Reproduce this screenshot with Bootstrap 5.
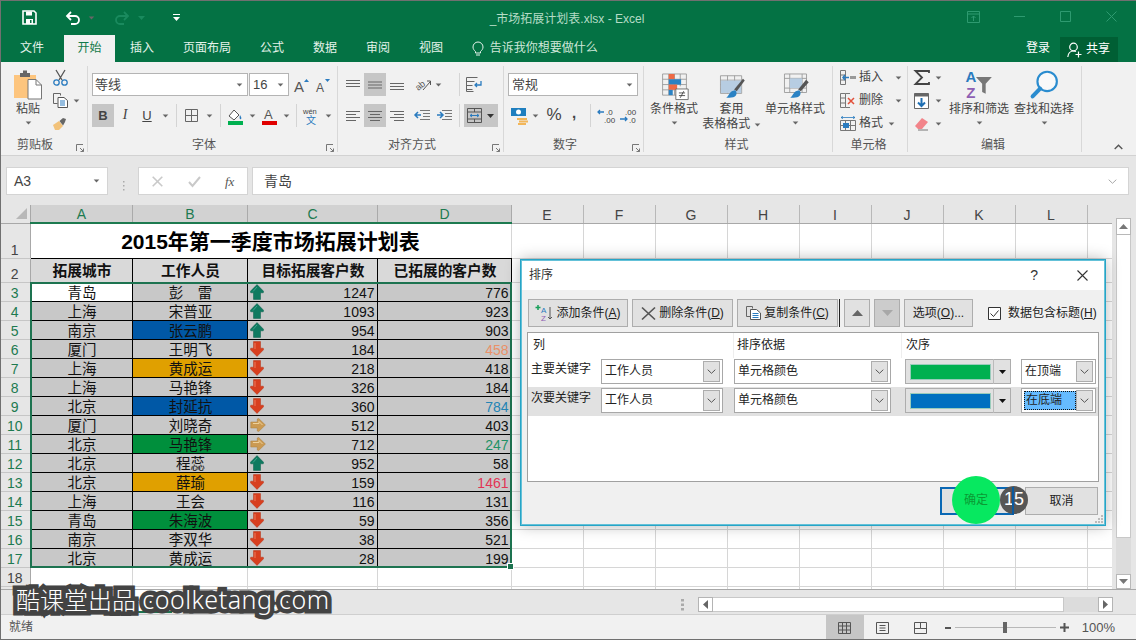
<!DOCTYPE html>
<html lang="zh-CN">
<head>
<meta charset="utf-8">
<title>Excel</title>
<link href="https://cdn.jsdelivr.net/npm/bootstrap@5.3.0/dist/css/bootstrap.min.css" rel="stylesheet">
<style>
html,body{margin:0;height:640px;overflow:hidden}
body{font-family:"Liberation Sans","Noto Sans CJK SC",sans-serif;font-size:12px;color:#444;background:#e6e6e6;line-height:1.2}
svg{display:block;flex:none;overflow:visible}
.xapp{position:relative;width:1136px;height:640px;overflow:hidden}
.xapp::after{content:"";position:absolute;inset:0;border:1px solid #707070;border-right:0;pointer-events:none}
.tbar{height:35px;background:#047244;color:#b5dcc6}
.tside{flex:1 1 0}
.ttext{padding-top:3px}
.wbtns{gap:0;padding-right:2px}
.wb{width:46px;display:flex;justify-content:center;padding-bottom:2px}
.tabs{height:27px;background:#047244;color:#fff;padding-left:5.5px}
.tab{padding:0 14.5px;line-height:27px;color:#e4f2ea;height:27px}
.tab-first{margin-right:5.5px}
.tab-on{background:#f1f1f1;color:#127a4a;padding:0 13.5px;margin-right:0}
.tab-tight{padding-left:15px}
.tell{margin-left:14px;color:#cfe7d9;gap:6px}
.login{color:#fff;margin-right:10px}
.share{width:58px;height:25px;background:#005f34;color:#fff;margin-right:18px;gap:4px;padding-left:7px}
.ribbon{height:94px;background:#f1f1f1;border-bottom:1px solid #d2d2d2}
.rg{position:relative;margin:4px 0 3px;border-right:1px solid #d8d8d8;display:flex;flex-direction:column}
.g1{width:88px}.g2{width:250px}.g3{width:166px}.g4{width:140px}.g5{width:189px}.g6{width:75px}.g7{width:174px}
.rb{flex:1 1 auto;display:flex;min-height:0}
.rl{height:17px;flex:none;display:grid;grid-template-columns:1fr auto 1fr;color:#555;line-height:17px;padding-right:3px;margin-bottom:-2px}
.rlp{padding-right:17px}
.rl span{grid-column:2}
.rl svg{grid-column:3;justify-self:end;align-self:end;margin:0 -14px 2px 0}
.rows{display:flex;flex-direction:column;padding:7px 0 0 4px;gap:8px}
.rr{display:flex;align-items:center;height:23px}
.ic{width:22px;height:23px;display:flex;align-items:center;justify-content:center;flex:none;color:#444}
.ic14{width:14px}.ic12{width:12px}.ic10{width:10px}.ic8{width:8px}.ic20{width:20px}
.on{background:#c6c6c6}
.vs{width:8px;height:23px;display:flex;justify-content:center;flex:none}
.vs::before{content:"";width:1px;background:#d4d4d4}
.sel{height:23px;background:#fff;border:1px solid #b4b4b4;display:flex;align-items:center;justify-content:space-between;padding:0 4px 0 2px;font-size:13px;color:#444;flex:none}
.sfont{width:156px}.ssize{width:40px;margin-left:1px;padding-left:3px}.snum{width:130px;padding-left:3px}
.bigs{padding:4px 0 0 6px;gap:5px}
.big{display:flex;flex-direction:column;align-items:center;text-align:center;color:#444;line-height:15px}
.big svg.bi{width:29px;height:30px;margin-bottom:2px}
.bw48{width:48px}.bw57{width:57px}.bw60{width:60px}
.paste{width:40px;margin-left:8px;margin-right:3px;padding-top:3px}
.big svg.pi{width:30px;height:31px;margin-bottom:2px}
.cliprow{display:flex;flex-direction:column;gap:0;padding-top:0}
.cc{display:flex;align-items:center;height:23px}
.cellcol{padding:0 0 0 7px;display:flex;flex-direction:column}
.cellrow{display:flex;align-items:center;height:23px;gap:3px;white-space:nowrap}
.fbar{height:49px;padding:11px 7px 0 6px;gap:0}
.namebox{width:102px;height:28px;background:#fff;border:1px solid #d4d4d4;font-size:14px;padding:0 7px;color:#444}
.fdots{width:30px;color:#999;line-height:4px}
.fbtns{width:110px;height:28px;background:#fff;border:1px solid #d4d4d4;padding:0 9px 0 13px;margin-right:4px}
.finput{flex:1;height:28px;background:#fff;border:1px solid #d4d4d4;font-size:14px;padding:0 11px;color:#444;margin-right:0}
.finput svg{opacity:.5}
.gridw{position:relative;height:384px;display:flex;overflow:hidden}
.gridbox{width:1112px;overflow:hidden;height:384px;border-bottom:0;flex:none}
table.xs{table-layout:fixed;width:1112px;border-collapse:collapse;background:#fff}
.xs th,.xs td{padding:0;height:19px;font-weight:400;text-align:center;vertical-align:bottom;line-height:18px;font-size:14.5px;color:#111;white-space:nowrap;overflow:hidden}
.xs td{border:1px solid #d6d6d6}
.xs thead th{height:18px;background:#e6e6e6;border-right:1px solid #b8b8b8;border-bottom:1px solid #a8a8a8;font-family:"Liberation Sans",sans-serif;font-size:14px;line-height:16px;color:#444}
.xs thead th.hs{background:#d2d2d2;color:#1d7a50;border-bottom:2px solid #1d7a50;border-right-color:#aaa;padding-left:1px}
.xs th.rh{background:#e6e6e6;border-right:1px solid #a8a8a8;border-bottom:1px solid #c6c6c6;font-family:"Liberation Sans",sans-serif;font-size:14px;color:#444;padding-top:2px;line-height:16px}
.xs th.rg2{color:#1d7a50;background:#e6e6e6}
.xs thead th.corner{background:#e6e6e6;border-right:1px solid #a8a8a8;padding-left:16px;vertical-align:middle}
.xs td.ttl{height:35px;font-size:21px;font-weight:700;color:#000;border:0;border-bottom:1px solid #000;line-height:28px;background:#fff;border-left:0;vertical-align:bottom;padding-bottom:2px}
.xs td.hd{height:24px;background:#d9d9d9;font-weight:700;border:1px solid #000;color:#111;font-size:14.7px;line-height:21px;padding:2px 0 0 2px}
.xs td.c{background:#c8c8c8;border:1px solid #000;padding:2px 0 0 2px;line-height:16px}
.xs td.cw{background:#fff}
.xs td.cb{background:#0058a6}.xs td.cy{background:#e0a000}.xs td.cg{background:#008f3c}
.xs td.n{font-family:"Liberation Sans",sans-serif;font-size:14px;text-align:right;padding-right:2px;padding-left:0}
.nf{display:flex;justify-content:space-between;align-items:flex-end;height:18px;margin-top:-2px;padding-left:2px}
.nf svg{align-self:center}
.t1{color:#ea9168!important}.t2{color:#2384b5!important}.t3{color:#1f9266!important}.t4{color:#e23455!important}
.selbox{position:absolute;left:30px;top:77px;width:482px;height:286px;border:2px solid #1d7350;pointer-events:none}
.selbox::after{content:"";position:absolute;right:-4px;bottom:-4px;box-sizing:content-box;width:5px;height:5px;background:#1d7350;border:1px solid #fff}
.vbar{width:24px;padding:13px 0 0 4px;flex:none}
.vbar>div{width:15px}
.sb{height:17px;background:#fff;border:1px solid #b8b8b8;display:flex;align-items:center;justify-content:center}
.vthumb{height:303px;background:#fff;border:1px solid #c8c8c8;border-top:0}
.vtrack{height:36px;background:#dcdcdc}
.sheets{height:25px;border-top:1px solid #a8a8a8;padding-top:0;background:#e6e6e6}
.stab{width:70px;height:23px;background:#fff;border-bottom:2px solid #1d7350;color:#1d7350;margin-left:102px;text-align:center;line-height:21px}
.stab2{margin-left:22px;color:#444;line-height:24px}
.hs1{width:15px;height:15px;background:#fff;border:1px solid #b4b4b4;display:flex;align-items:center;justify-content:center}
.hs2{width:351px;height:15px;background:#fff;border:1px solid #c8c8c8;border-left:0}
.hs3{width:34px;height:15px;background:#dcdcdc}
.sbar{height:26px;background:#f1f1f1;border-top:1px solid #cfcfcf;padding-left:9px;color:#555}
.vw{width:38px;height:25px;display:flex;align-items:center;justify-content:center}
.vwon{background:#c6c6c6}
.dlg{position:absolute;left:520px;top:259px;width:586px;height:267px;border:1px solid #27a4c6;box-shadow:0 0 14px rgba(0,0,0,.28);background:#f0f0f0;display:flex;flex-direction:column;color:#222;outline:1px solid #64c1d8;outline-offset:-2px}
.dhead{height:30px;background:#fff;padding:0 0 0 8px;color:#333;flex:none}
.dq{margin-left:auto;margin-right:39px;font-size:14px}
.dx{margin-right:17px}
.dbar{margin:9px 0 0 7px;gap:4px;height:28px}
.dbtn{height:28px;padding:0;font-size:12px;line-height:26px;border:1px solid #adadad;border-radius:0;background:#e1e1e1;color:#222;display:flex;align-items:center;justify-content:center;gap:3px;flex:none}
.dbtn:hover{background:#e1e1e1;border-color:#adadad;color:#222}
.w100{width:100px}.w101{width:101px}.w26{width:26px}.w69{width:69px}.w73{width:73px}
.dsplit{width:1px;height:28px;background:#222;margin:0 0 0 -3px;flex:none}
.dchk{margin-left:11px;gap:7px;white-space:nowrap}
.lbx{margin:5px 0 0 6px;width:572px;height:150px;background:#fff;border:1px solid #a0a0a0;flex:none}
.lh{height:25px}
.lh>div{height:25px;line-height:24px;padding-left:5px}
.lh>div.lc2{width:168px;border-left:1px solid #eee;padding-left:3px}
.lh>div.lc3{border-left:1px solid #eee;padding-left:4px}
.lr{height:29px;padding-top:1px;align-items:flex-start}
.lsel{background:#e1e1e1}
.lk{width:73px;padding-left:3px;line-height:18px;padding-top:1px;white-space:nowrap;flex:none}
.cmb{height:25px;background:#fff;border:1px solid #a8a8a8;display:flex;align-items:center;justify-content:space-between;padding-left:3px;padding-right:2px;flex:none;color:#222}
.cmbb{width:17px;height:21px;background:#e1e1e1;border:1px solid #adadad;display:flex;align-items:center;justify-content:center}
.cw122{width:122px;margin-right:11px}.cw157{width:157px;margin-right:14px}.cw75{width:75px;margin-left:10px}
.cc106{width:106px;height:25px;background:#e1e1e1;border:1px solid #adadad;padding:4px 0 4px 4px;gap:2px;flex:none}
.swt{width:81px;height:16px;border:1px solid #9cb;flex:none}
.sg{background:#00b050}.sbl{background:#0070c0}
.cdiv{width:1px;height:25px;background:#bbb;margin:-4px 0;flex:none}
.cdn{margin-left:3px}
.hl{background:#66bbff;outline:1px dotted #111;outline-offset:-1px;padding:2px 1px 2px 2px;margin-left:-1px;width:54px}
.dfoot{margin-top:5px;padding-right:7px;justify-content:flex-end;gap:12px}
.okb{width:73px;height:28px;border:2px solid #0a68b4;background:#e1e1e1;flex:none;padding:0;border-radius:0}
.okb:hover{background:#e1e1e1;border-color:#0a68b4}
.grip{position:absolute;right:1px;bottom:1px}
.tap{position:absolute;left:952px;top:476px;width:48px;height:48px;border-radius:50%;background:#07e860;color:#0b9a34;display:flex;align-items:center;justify-content:center;font-size:12px;z-index:4}
.stepn{position:absolute;left:1000px;top:486px;width:28px;height:28px;border-radius:50%;background:#565656;color:#fff;font-size:18px;display:flex;align-items:center;justify-content:center;font-family:"Liberation Sans",sans-serif;z-index:2}
.okline{position:absolute;left:1012px;top:487px;width:2px;height:28px;background:#0a5aa0;z-index:3}
.wm{position:absolute;left:16px;top:581px;white-space:nowrap;font-size:24px;line-height:36px;color:#fff;font-family:"Noto Sans","Noto Sans CJK SC",sans-serif;font-weight:300;-webkit-text-stroke:9px #434343;paint-order:stroke fill;z-index:5}
.wm2{font-size:25px;letter-spacing:.5px}
</style>
</head>
<body>
<svg width="0" height="0" class="position-absolute">
<defs>
<symbol id="cr" viewBox="0 0 8 5"><path d="M.5.5h7L4 4.500z" fill="#666"/></symbol>
<symbol id="au" viewBox="0 0 14 16"><path d="M7 .6 13.800 7.500l-.6 1.300H10.500v6.600h-7V8.800H.8l-.6-1.300z" fill="#0f7a60" stroke="#0b5f4a" stroke-width=".5"/><path d="M7 3 3 7.500" stroke="#3fa58c" fill="none"/></symbol>
<symbol id="ad" viewBox="0 0 14 16"><path d="M7 15.400 13.800 8.500l-.6-1.300H10.500V.6h-7v6.600H.8l-.6 1.300z" fill="#d83f1f" stroke="#b53216" stroke-width=".5"/><path d="M5 2v6" stroke="#ee7b5c" fill="none"/></symbol>
<symbol id="ar" viewBox="0 0 16 14"><path d="M15.400 7 8.600.4l-1.300.6v3H.8v6h6.500v3l1.300.6z" fill="#cb9a52" stroke="#a97c38" stroke-width=".5"/><path d="M3 5.500h6v-2l3.500 3.500" stroke="#eed19a" fill="none"/></symbol>
<symbol id="chev" viewBox="0 0 9 5"><path d="M.7.7 4.500 4.300 8.300.7" fill="none" stroke="#555"/></symbol>
<symbol id="lnc" viewBox="0 0 8 8"><path d="M.5 7V.5H7M4 4l3.500 3.500M7.500 4.500v3h-3" fill="none" stroke="#777"/></symbol>
</defs>
</svg>
<div class="xapp d-flex flex-column">

<header class="tbar d-flex align-items-center">
  <div class="tside d-flex align-items-center">
    <svg style="margin-left:22px" width="15" height="15" viewBox="0 0 15 15"><path d="M1 1h11l2 2v11H1z" fill="none" stroke="#fff" stroke-width="1.600"/><path d="M4 1.500h6v4H4zM4 9h7v5H4z" fill="#fff"/><path d="M8 10h1.500v3H8z" fill="#047244"/></svg>
    <svg style="margin-left:28px" width="15" height="14" viewBox="0 0 15 14"><path d="M2 5h8a3.800 3.800 0 0 1 0 8H6M6 1 2 5l4 4" fill="none" stroke="#fff" stroke-width="1.800"/></svg>
    <svg style="margin-left:8px" width="7" height="4"><use href="#cr"/></svg>
    <svg style="margin-left:20px" width="15" height="14" viewBox="0 0 15 14"><path d="M13 5H5a3.800 3.800 0 0 0 0 8h4M9 1l4 4-4 4" fill="none" stroke="#1a8a5e" stroke-width="1.800"/></svg>
    <svg style="margin-left:8px" width="7" height="4" viewBox="0 0 7 4"><path d="M0 0h7L3.500 4z" fill="#1a8a5e"/></svg>
    <svg style="margin-left:28px" width="7" height="7" viewBox="0 0 7 7"><path d="M0 .5h7" stroke="#fff"/><path d="M0 3h7L3.500 7z" fill="#fff"/></svg>
  </div>
  <div class="ttext">_市场拓展计划表.xlsx - Excel</div>
  <div class="tside d-flex justify-content-end wbtns">
    <div class="wb"><svg width="13" height="12" viewBox="0 0 13 12"><path d="M.5.5h12v11H.500zM.5 3h12M6.500 10V5M4.500 7l2-2 2 2" fill="none" stroke="#2e9a70"/></svg></div>
    <div class="wb"><svg width="11" height="11" viewBox="0 0 11 11"><path d="M0 5.500h11" stroke="#2e9a70"/></svg></div>
    <div class="wb"><svg width="11" height="11" viewBox="0 0 11 11"><path d="M.5.5h10v10H.500z" fill="none" stroke="#2e9a70"/></svg></div>
    <div class="wb"><svg width="11" height="11" viewBox="0 0 11 11"><path d="M.5.5l10 10M10.500.5l-10 10" fill="none" stroke="#2e9a70"/></svg></div>
  </div>
</header>

<nav class="tabs d-flex align-items-end">
  <div class="tab tab-first">文件</div>
  <div class="tab tab-on">开始</div>
  <div class="tab tab-tight">插入</div>
  <div class="tab">页面布局</div>
  <div class="tab">公式</div>
  <div class="tab">数据</div>
  <div class="tab">审阅</div>
  <div class="tab">视图</div>
  <div class="tell d-flex align-items-center h-100">
    <svg width="12" height="15" viewBox="0 0 12 15"><path d="M3.500 10.500C2 9.300 1 7.800 1 6a5 5 0 0 1 10 0c0 1.800-1 3.300-2.500 4.500v1.500h-5zM4 14h4" fill="none" stroke="#e6f3ec"/></svg>
    <span>告诉我你想要做什么</span>
  </div>
  <div class="login ms-auto h-100 d-flex align-items-center">登录</div>
  <div class="share d-flex align-items-center">
    <svg width="15" height="16" viewBox="0 0 15 16"><circle cx="6.500" cy="5" r="3.800" fill="none" stroke="#fff" stroke-width="1.200"/><path d="M.8 15c.4-3.500 2.200-6 5.700-6 1 0 1.800.2 2.500.6M11.500 9.500v6M8.500 12.500h6" fill="none" stroke="#fff" stroke-width="1.200"/></svg>
    <span>共享</span>
  </div>
</nav>

<section class="ribbon d-flex">
  <div class="rg g1">
    <div class="rb">
      <div class="big paste">
        <svg class="pi" viewBox="0 0 30 31"><path d="M1 6h22v23H1z" fill="#fdc57e"/><path d="M7 4h3V1.500h4V4h3v4H7z" fill="#666"/><path d="M15 10.500h8l5.500 5.500v14H15z" fill="#fff" stroke="#777"/><path d="M23 10.500V16h5.500" fill="none" stroke="#777"/></svg>
        <span>粘贴</span>
        <svg class="mt-1" width="7" height="4"><use href="#cr"/></svg>
      </div>
      <div class="cliprow">
        <div class="cc"><svg style="margin-left:2px" width="15" height="16" viewBox="0 0 15 16"><path d="M3 0l6 10M12 0 6 10" stroke="#555" fill="none" stroke-width="1.300"/><circle cx="3.500" cy="12.500" r="2.700" fill="none" stroke="#2a7bbf" stroke-width="1.300"/><circle cx="11.500" cy="12.500" r="2.700" fill="none" stroke="#2a7bbf" stroke-width="1.300"/></svg></div>
        <div class="cc"><svg style="margin-left:2px" width="15" height="15" viewBox="0 0 15 15"><path d="M.5.5h7v2M.5.500v10h4" fill="none" stroke="#666"/><path d="M5 4.500h6l3.500 3v7H5z" fill="#fff" stroke="#555"/><path d="M7 8h5M7 10h5M7 12h5" stroke="#2a7bbf"/></svg><svg style="margin-left:5px" width="7" height="4"><use href="#cr"/></svg></div>
        <div class="cc"><svg style="margin-left:1px" width="16" height="15" viewBox="0 0 16 15"><path d="M1 9l6-4 4 5-4 4H3z" fill="#f2c27a"/><path d="M7.500 5 11 2l3 1-1 3-2 3.500z" fill="#666"/></svg></div>
      </div>
    </div>
    <div class="rl rlp"><span>剪贴板</span><svg width="8" height="8"><use href="#lnc"/></svg></div>
  </div>

  <div class="rg g2">
    <div class="rb rows">
      <div class="rr">
        <div class="sel sfont">等线<svg width="7" height="4"><use href="#cr"/></svg></div>
        <div class="sel ssize">16<svg width="7" height="4"><use href="#cr"/></svg></div>
        <div class="ic ms-1" style="font-size:15px;width:20px"><svg width="18" height="18" viewBox="0 0 18 18"><text x="0" y="16" font-size="15" fill="#555">A</text><path d="M10 5l2.500-3L15 5z" fill="#2a7bbf" transform="translate(0 1)"/></svg></div>
        <div class="ic"><svg width="16" height="18" viewBox="0 0 16 18"><text x="0" y="16" font-size="12" fill="#555">A</text><path d="M9 3h5l-2.500 3z" fill="#2a7bbf"/></svg></div>
      </div>
      <div class="rr">
        <div class="ic on fw-bold" style="font-size:13px">B</div>
        <div class="ic" style="font-style:italic;font-family:'Liberation Serif',serif;font-size:14px">I</div>
        <div class="ic text-decoration-underline" style="font-size:13px">U</div>
        <div class="ic ic14"><svg width="7" height="4"><use href="#cr"/></svg></div>
        <div class="vs"></div>
        <div class="ic"><svg width="13" height="13" viewBox="0 0 13 13"><path d="M.5.5h12v12H.500zM6.500.5v12M.5 6.500h12" fill="none" stroke="#666"/></svg></div>
        <div class="ic ic14"><svg width="7" height="4"><use href="#cr"/></svg></div>
        <div class="vs"></div>
        <div class="ic"><svg width="17" height="18" viewBox="0 0 17 18"><path d="M2 9l5-6 5 5-5 5z" fill="#fff" stroke="#555"/><path d="M13 8c1 2 2 3 1 4s-2-1-1-4z" fill="#2a7bbf"/><path d="M1 14h15v4H1z" fill="#00b050"/></svg></div>
        <div class="ic ic12"><svg width="7" height="4"><use href="#cr"/></svg></div>
        <div class="ic"><svg width="17" height="18" viewBox="0 0 17 18"><text x="3" y="12" font-size="13" fill="#555">A</text><path d="M1 14h15v4H1z" fill="#e00000"/></svg></div>
        <div class="ic ic12"><svg width="7" height="4"><use href="#cr"/></svg></div>
        <div class="vs"></div>
        <div class="ic" style="line-height:9px"><svg width="18" height="18" viewBox="0 0 18 18"><text x="1" y="7" font-size="7.500" fill="#444">wén</text><text x="4" y="17" font-size="10" fill="#2a7bbf">文</text></svg></div>
        <div class="ic ic12"><svg width="7" height="4"><use href="#cr"/></svg></div>
      </div>
    </div>
    <div class="rl rlp"><span>字体</span><svg width="8" height="8"><use href="#lnc"/></svg></div>
  </div>

  <div class="rg g3">
    <div class="rb rows">
      <div class="rr">
        <div class="ic"><svg width="14" height="10" viewBox="0 0 14 10"><path d="M0 .5h14M0 3.500h14M0 6.500h14" stroke="#666"/></svg></div>
        <div class="ic on"><svg width="14" height="10" viewBox="0 0 14 10"><path d="M0 2h14M0 5h14M0 8h14" stroke="#666"/></svg></div>
        <div class="ic"><svg width="14" height="10" viewBox="0 0 14 10"><path d="M0 3.500h14M0 6.500h14M0 9.500h14" stroke="#666"/></svg></div>
        <div class="ic ms-1"><svg width="17" height="14" viewBox="0 0 17 14"><text x="1" y="11" font-size="9" fill="#555" transform="rotate(-40 5 9)">ab</text><path d="M8 12 15 4M12 3l3.500 0 0 4" fill="none" stroke="#555"/></svg></div>
        <div class="ic ic8"><svg width="7" height="4"><use href="#cr"/></svg></div>
        <div class="vs" style="margin-left:13px"></div>
        <div class="ic"><svg width="16" height="15" viewBox="0 0 16 15"><path d="M.5.5h11M.5 4.500h8M.5 8.500h6M.5 12.500h6M.5.500v14h7" fill="none" stroke="#666"/><path d="M15 4v4H9M11 6 9 8l2 2" fill="none" stroke="#2a7bbf" stroke-width="1.300"/></svg></div>
      </div>
      <div class="rr">
        <div class="ic"><svg width="14" height="10" viewBox="0 0 14 10"><path d="M0 .5h14M0 3.500h10M0 6.500h14M0 9.500h10" stroke="#666"/></svg></div>
        <div class="ic on"><svg width="14" height="10" viewBox="0 0 14 10"><path d="M0 .5h14M2 3.500h10M0 6.500h14M2 9.500h10" stroke="#666"/></svg></div>
        <div class="ic"><svg width="14" height="10" viewBox="0 0 14 10"><path d="M0 .5h14M4 3.500h10M0 6.500h14M4 9.500h10" stroke="#666"/></svg></div>
        <div class="ic" style="margin-left:3px"><svg width="16" height="11" viewBox="0 0 16 11"><path d="M6 .5h10M9 3.500h7M9 6.500h7M6 9.500h10" stroke="#777"/><path d="M7 5H1M4 2 1 5l3 3" fill="none" stroke="#2a7bbf" stroke-width="1.500"/></svg></div>
        <div class="ic"><svg width="16" height="11" viewBox="0 0 16 11"><path d="M6 .5h10M9 3.500h7M9 6.500h7M6 9.500h10" stroke="#777"/><path d="M1 5h6M4 2l3 3-3 3" fill="none" stroke="#2a7bbf" stroke-width="1.500"/></svg></div>
        <div class="vs"></div>
        <div class="d-flex align-items-center on" style="width:34px;height:23px;margin-left:1px"><svg style="margin-left:3px" width="15" height="15" viewBox="0 0 15 15"><path d="M.5.5h14v14H.500zM.5 4h14M.5 11h14M7.500.5V4M7.500 11v3.500" fill="none" stroke="#555"/><path d="M3 7.500h9M3 7.500l2-1.500M3 7.500l2 1.500M12 7.500l-2-1.500M12 7.500l-2 1.500" fill="none" stroke="#2a7bbf"/></svg><svg style="margin-left:5px" width="7" height="4" viewBox="0 0 7 4"><path d="M0 0h7L3.500 4z" fill="#333"/></svg></div>
      </div>
    </div>
    <div class="rl rlp"><span>对齐方式</span><svg width="8" height="8"><use href="#lnc"/></svg></div>
  </div>

  <div class="rg g4">
    <div class="rb rows">
      <div class="rr"><div class="sel snum">常规<svg width="7" height="4"><use href="#cr"/></svg></div></div>
      <div class="rr">
        <div class="ic"><svg width="19" height="18" viewBox="0 0 19 18"><path d="M1 1h15v8H1z" fill="#1f7fbf"/><circle cx="8.500" cy="5" r="2.500" fill="#fff"/><path d="M7 12h10M9 14.500h9M8 17h8" stroke="#f2b65a" stroke-width="1.800"/></svg></div>
        <div class="ic ic10"><svg width="7" height="4"><use href="#cr"/></svg></div>
        <div class="ic ms-1" style="font-size:17px;width:20px">%</div>
        <div class="ic ic20 fw-bold" style="font-size:15px;line-height:13px;height:23px;padding-bottom:6px">,</div>
        <div class="vs" style="width:12px"></div>
        <div class="ic ic20"><svg width="18" height="15" viewBox="0 0 18 15"><text x="9" y="7" font-size="8" fill="#444">.0</text><text x="7" y="15" font-size="8" fill="#444">.00</text><path d="M7 4H1M3 2 1 4l2 2" stroke="#2a7bbf" fill="none" stroke-width="1.300"/></svg></div>
        <div class="ic ic20" style="margin-left:2px"><svg width="18" height="15" viewBox="0 0 18 15"><text x="6" y="7" font-size="8" fill="#444">.00</text><text x="10" y="15" font-size="8" fill="#444">.0</text><path d="M1 11h7M6 9l2 2-2 2" stroke="#2a7bbf" fill="none" stroke-width="1.300"/></svg></div>
      </div>
    </div>
    <div class="rl rlp"><span>数字</span><svg width="8" height="8"><use href="#lnc"/></svg></div>
  </div>

  <div class="rg g5">
    <div class="rb bigs">
      <div class="big bw48">
        <svg class="bi" viewBox="0 0 32 34"><path d="M2.500 4.500h27v24h-27zM2.500 10.500h27M2.500 16.500h27M2.500 22.500h20M9.500 4.500v24M16 4.500v24M22.500 4.500v14" fill="none" stroke="#999"/><path d="M9.500 4.500H16v6H9.500z" fill="#ef6a45"/><path d="M9.500 10.500h14v6h-14z" fill="#2a82c4"/><path d="M9.500 16.500H19v6H9.500z" fill="#ef6a45"/><path d="M9.500 22.500H14v6H9.500z" fill="#2a82c4"/><path d="M17.500 21.500h14v12h-14z" fill="#fff" stroke="#666"/><path d="M21 26h7M21 29h7M26.500 24l-4 7.500" fill="none" stroke="#444"/></svg>
        <span>条件格式</span>
        <svg class="mt-1" width="7" height="4"><use href="#cr"/></svg>
      </div>
      <div class="big bw57">
        <svg class="bi" viewBox="0 0 32 34"><path d="M3.500 6.500h24v20h-24zM3.500 11.500h24M3.500 16.500h24M3.500 21.500h24M11.500 6.500v20M19.500 6.500v20" fill="none" stroke="#999"/><path d="M4 12h23v14H4z" fill="#b7cde2"/><path d="M31 12 22 24l-3-2 10-12z" fill="#555"/><path d="M20 23c3 2 2 7-2 8-3 .5-6 .5-8 .5 3-2 4-8 10-8.500z" fill="#2a82c4"/></svg>
        <span>套用</span>
        <span class="text-nowrap">表格格式 <svg class="d-inline" width="7" height="4"><use href="#cr"/></svg></span>
      </div>
      <div class="big bw60">
        <svg class="bi" viewBox="0 0 32 34"><path d="M3.500 4.500h25v21h-25zM3.500 9.500h25M3.500 20.500h25M9.500 4.500v21M23.500 4.500v21" fill="none" stroke="#999"/><path d="M9.500 9.500h14v11h-14z" fill="#b7cde2"/><path d="M31 14 22 24l-3-2 9-11z" fill="#555"/><path d="M20 23c3 2 2 7-2 8-3 .5-6 .5-8 .5 3-2 4-8 10-8.500z" fill="#2a82c4"/></svg>
        <span class="text-nowrap">单元格样式</span>
        <svg class="mt-1" width="7" height="4"><use href="#cr"/></svg>
      </div>
    </div>
    <div class="rl"><span>样式</span></div>
  </div>

  <div class="rg g6">
    <div class="rb cellcol">
      <div class="cellrow"><svg width="16" height="15" viewBox="0 0 16 15"><path d="M.5.5h5v14h-5zM5.500 5h-5M5.500 10h-5" fill="none" stroke="#777"/><path d="M10 7.500h6" stroke="#999" stroke-width="3"/><path d="M9 7.500H3M5 5 3 7.500 5 10" fill="none" stroke="#2a7bbf" stroke-width="1.500"/></svg><span>插入</span><svg style="margin-left:9px" width="7" height="4"><use href="#cr"/></svg></div>
      <div class="cellrow"><svg width="16" height="15" viewBox="0 0 16 15"><path d="M.5.5h5v14h-5zM5.500 5h-5M5.500 10h-5M5.500 .5H10M5.500 14.500H10" fill="none" stroke="#777"/><path d="M8 5l6 6M14 5l-6 6" stroke="#e2503a" stroke-width="1.500"/></svg><span>删除</span><svg style="margin-left:9px" width="7" height="4"><use href="#cr"/></svg></div>
      <div class="cellrow"><svg width="16" height="15" viewBox="0 0 16 15"><path d="M.5 4.500h15v10H.500zM5.500 4.500v10M10.500 4.500v10M.5 9.500h15" fill="none" stroke="#777"/><path d="M3 7h6v5H3z" fill="#2a7bbf"/><path d="M1 1.500h14M1 1.500l2-1.200M1 1.500l2 1.200M15 1.500l-2-1.200M15 1.500l-2 1.200" stroke="#2a7bbf" fill="none" stroke-width=".8"/></svg><span>格式</span><svg style="margin-left:2px" width="7" height="4"><use href="#cr"/></svg></div>
    </div>
    <div class="rl"><span>单元格</span></div>
  </div>

  <div class="rg g7">
    <div class="rb">
      <div class="cellcol" style="width:41px;padding-left:6px">
        <div class="cellrow" style="gap:5px"><svg width="16" height="15" viewBox="0 0 16 15"><path d="M15 3V1H1.500L8 7.500 1.500 14H15v-2" fill="none" stroke="#444" stroke-width="1.800"/></svg><svg width="7" height="4"><use href="#cr"/></svg></div>
        <div class="cellrow" style="gap:5px"><svg width="15" height="16" viewBox="0 0 15 16"><path d="M.5.5h14v15H.500z" fill="#fff" stroke="#666"/><path d="M.5.500h14v3H.500z" fill="#666"/><path d="M7.500 5v8M4 9.500l3.500 3.500L11 9.500" fill="none" stroke="#1f6fb3" stroke-width="2"/></svg><svg style="margin-left:1px" width="7" height="4"><use href="#cr"/></svg></div>
        <div class="cellrow" style="gap:5px"><svg width="15" height="14" viewBox="0 0 15 14"><path d="M1 9 8 1l6 4-6 7H4z" fill="#f2848a"/><path d="M4 13h10" stroke="#777"/></svg><svg style="margin-left:1px" width="7" height="4"><use href="#cr"/></svg></div>
      </div>
      <div class="big bw60" style="padding-top:4px">
        <svg class="bi" viewBox="0 0 32 34"><text x="0" y="14" font-size="17" fill="#2a7bbf" font-weight="700">A</text><text x="1" y="32" font-size="17" fill="#8e5fb3" font-weight="700">Z</text><path d="M12 8h18l-7 7.500V27l-4-2v-9.500z" fill="#777"/></svg>
        <span class="text-nowrap">排序和筛选</span>
        <svg class="mt-1" width="7" height="4"><use href="#cr"/></svg>
      </div>
      <div class="big bw60" style="padding-top:4px;margin-left:5px">
        <svg class="bi" viewBox="0 0 32 34"><circle cx="19" cy="13" r="11" fill="#fff" fill-opacity=".6" stroke="#2a8ccf" stroke-width="2.400"/><path d="M11 21 2.500 30" stroke="#2a8ccf" stroke-width="4.500" stroke-linecap="round"/></svg>
        <span class="text-nowrap">查找和选择</span>
        <svg class="mt-1" width="7" height="4"><use href="#cr"/></svg>
      </div>
    </div>
    <div class="rl"><span>编辑</span></div>
  </div>
  <div class="flex-grow-1 d-flex justify-content-end align-items-end" style="padding:0 13px 5px 0"><svg width="9" height="6" viewBox="0 0 9 6"><path d="M.7 5 4.500 1.200 8.300 5" fill="none" stroke="#555" stroke-width="1.400"/></svg></div>
</section>

<section class="fbar d-flex">
  <div class="namebox d-flex align-items-center justify-content-between">A3<svg width="7" height="4"><use href="#cr"/></svg></div>
  <div class="fdots d-flex justify-content-center align-items-center"><svg width="3" height="12" viewBox="0 0 3 12"><path d="M1 1h1.500v1.500H1zM1 5h1.500v1.500H1zM1 9h1.500v1.500H1z" fill="#aaa"/></svg></div>
  <div class="fbtns d-flex align-items-center justify-content-between">
    <svg width="11" height="11" viewBox="0 0 11 11"><path d="M.7.7l9.600 9.600M10.300.7.700 10.300" stroke="#c9c9c9" stroke-width="1.600"/></svg>
    <svg width="13" height="11" viewBox="0 0 13 11"><path d="M1 6l3.500 4L12 1" fill="none" stroke="#c9c9c9" stroke-width="2"/></svg>
    <svg width="13" height="13" viewBox="0 0 13 13"><text x="0" y="11" font-family="Liberation Serif" font-style="italic" font-size="13" fill="#555">fx</text></svg>
  </div>
  <div class="finput d-flex align-items-center justify-content-between">青岛<svg width="9" height="5"><use href="#chev"/></svg></div>
</section>

<section class="gridw">
  <div class="gridbox">
  <table class="xs">
    <colgroup><col style="width:30px"><col style="width:102px"><col style="width:115px"><col style="width:130px"><col style="width:134px"><col style="width:72px"><col style="width:72px"><col style="width:72px"><col style="width:72px"><col style="width:72px"><col style="width:72px"><col style="width:72px"><col style="width:72px"><col style="width:25px"></colgroup>
    <thead><tr><th class="corner"><svg width="11" height="11" viewBox="0 0 11 11"><path d="M11 0v11H0z" fill="#b8b8b8"/></svg></th><th class="hs">A</th><th class="hs">B</th><th class="hs">C</th><th class="hs">D</th><th>E</th><th>F</th><th>G</th><th>H</th><th>I</th><th>J</th><th>K</th><th>L</th><th></th></tr></thead>
    <tbody>
      <tr><th class="rh" style="height:35px">1</th><td class="ttl" colspan="4">2015年第一季度市场拓展计划表</td><td></td><td></td><td></td><td></td><td></td><td></td><td></td><td></td><td></td></tr>
      <tr><th class="rh" style="height:24px">2</th><td class="hd">拓展城市</td><td class="hd">工作人员</td><td class="hd">目标拓展客户数</td><td class="hd">已拓展的客户数</td><td></td><td></td><td></td><td></td><td></td><td></td><td></td><td></td><td></td></tr>
      <tr><th class="rh rg2">3</th><td class="c cw">青岛</td><td class="c">彭&emsp;雷</td><td class="c n"><div class="nf"><svg width="14" height="16"><use href="#au"/></svg>1247</div></td><td class="c n">776</td><td></td><td></td><td></td><td></td><td></td><td></td><td></td><td></td><td></td></tr>
      <tr><th class="rh rg2">4</th><td class="c">上海</td><td class="c">宋普亚</td><td class="c n"><div class="nf"><svg width="14" height="16"><use href="#au"/></svg>1093</div></td><td class="c n">923</td><td></td><td></td><td></td><td></td><td></td><td></td><td></td><td></td><td></td></tr>
      <tr><th class="rh rg2">5</th><td class="c">南京</td><td class="c cb">张云鹏</td><td class="c n"><div class="nf"><svg width="14" height="16"><use href="#au"/></svg>954</div></td><td class="c n">903</td><td></td><td></td><td></td><td></td><td></td><td></td><td></td><td></td><td></td></tr>
      <tr><th class="rh rg2">6</th><td class="c">厦门</td><td class="c">王明飞</td><td class="c n"><div class="nf"><svg width="14" height="16"><use href="#ad"/></svg>184</div></td><td class="c n t1">458</td><td></td><td></td><td></td><td></td><td></td><td></td><td></td><td></td><td></td></tr>
      <tr><th class="rh rg2">7</th><td class="c">上海</td><td class="c cy">黄成运</td><td class="c n"><div class="nf"><svg width="14" height="16"><use href="#ad"/></svg>218</div></td><td class="c n">418</td><td></td><td></td><td></td><td></td><td></td><td></td><td></td><td></td><td></td></tr>
      <tr><th class="rh rg2">8</th><td class="c">上海</td><td class="c">马艳锋</td><td class="c n"><div class="nf"><svg width="14" height="16"><use href="#ad"/></svg>326</div></td><td class="c n">184</td><td></td><td></td><td></td><td></td><td></td><td></td><td></td><td></td><td></td></tr>
      <tr><th class="rh rg2">9</th><td class="c">北京</td><td class="c cb">封延抗</td><td class="c n"><div class="nf"><svg width="14" height="16"><use href="#ad"/></svg>360</div></td><td class="c n t2">784</td><td></td><td></td><td></td><td></td><td></td><td></td><td></td><td></td><td></td></tr>
      <tr><th class="rh rg2">10</th><td class="c">厦门</td><td class="c">刘晓奇</td><td class="c n"><div class="nf"><svg width="16" height="14"><use href="#ar"/></svg>512</div></td><td class="c n">403</td><td></td><td></td><td></td><td></td><td></td><td></td><td></td><td></td><td></td></tr>
      <tr><th class="rh rg2">11</th><td class="c">北京</td><td class="c cg">马艳锋</td><td class="c n"><div class="nf"><svg width="16" height="14"><use href="#ar"/></svg>712</div></td><td class="c n t3">247</td><td></td><td></td><td></td><td></td><td></td><td></td><td></td><td></td><td></td></tr>
      <tr><th class="rh rg2">12</th><td class="c">北京</td><td class="c">程蕊</td><td class="c n"><div class="nf"><svg width="14" height="16"><use href="#au"/></svg>952</div></td><td class="c n">58</td><td></td><td></td><td></td><td></td><td></td><td></td><td></td><td></td><td></td></tr>
      <tr><th class="rh rg2">13</th><td class="c">北京</td><td class="c cy">薛瑜</td><td class="c n"><div class="nf"><svg width="14" height="16"><use href="#ad"/></svg>159</div></td><td class="c n t4">1461</td><td></td><td></td><td></td><td></td><td></td><td></td><td></td><td></td><td></td></tr>
      <tr><th class="rh rg2">14</th><td class="c">上海</td><td class="c">王会</td><td class="c n"><div class="nf"><svg width="14" height="16"><use href="#ad"/></svg>116</div></td><td class="c n">131</td><td></td><td></td><td></td><td></td><td></td><td></td><td></td><td></td><td></td></tr>
      <tr><th class="rh rg2">15</th><td class="c">青岛</td><td class="c cg">朱海波</td><td class="c n"><div class="nf"><svg width="14" height="16"><use href="#ad"/></svg>59</div></td><td class="c n">356</td><td></td><td></td><td></td><td></td><td></td><td></td><td></td><td></td><td></td></tr>
      <tr><th class="rh rg2">16</th><td class="c">南京</td><td class="c">李双华</td><td class="c n"><div class="nf"><svg width="14" height="16"><use href="#ad"/></svg>38</div></td><td class="c n">521</td><td></td><td></td><td></td><td></td><td></td><td></td><td></td><td></td><td></td></tr>
      <tr><th class="rh rg2">17</th><td class="c">北京</td><td class="c">黄成运</td><td class="c n"><div class="nf"><svg width="14" height="16"><use href="#ad"/></svg>28</div></td><td class="c n">199</td><td></td><td></td><td></td><td></td><td></td><td></td><td></td><td></td><td></td></tr>
      <tr><th class="rh">18</th><td></td><td></td><td></td><td></td><td></td><td></td><td></td><td></td><td></td><td></td><td></td><td></td><td></td></tr>
      <tr><th class="rh">19</th><td></td><td></td><td></td><td></td><td></td><td></td><td></td><td></td><td></td><td></td><td></td><td></td><td></td></tr>
    </tbody>
  </table>
  </div>
  <div class="selbox"></div>
  <div class="vbar">
    <div class="sb"><svg width="9" height="5" viewBox="0 0 9 5"><path d="M0 5 4.500 0 9 5z" fill="#777"/></svg></div>
    <div class="vthumb"></div>
    <div class="vtrack"></div>
    <div class="sb" style="height:15px"><svg width="9" height="5" viewBox="0 0 9 5"><path d="M0 0 4.500 5 9 0z" fill="#777"/></svg></div>
  </div>
</section>

<section class="sheets d-flex align-items-start">
  <div class="stab">Sheet1</div>
  <div class="stab2">Sheet2</div>
  <div class="stab2">Sheet3</div>
  <div class="d-flex align-items-center" style="margin-left:auto;padding-top:7px;margin-right:23px">
    <svg width="3" height="12" viewBox="0 0 3 12" style="margin-right:14px"><path d="M0 0h3v2.500H0zM0 4.500h3V7H0zM0 9h3v2.500H0z" fill="#aaa"/></svg>
    <div class="hs1"><svg width="5" height="9" viewBox="0 0 5 9"><path d="M5 0 0 4.500 5 9z" fill="#666"/></svg></div>
    <div class="hs2"></div>
    <div class="hs3"></div>
    <div class="hs1"><svg width="5" height="9" viewBox="0 0 5 9"><path d="M0 0l5 4.500L0 9z" fill="#666"/></svg></div>
  </div>
</section>

<footer class="sbar d-flex align-items-center">
  <span>就绪</span>
  <div class="ms-auto d-flex align-items-center" style="margin-right:21px">
    <div class="vw vwon"><svg width="13" height="12" viewBox="0 0 13 12"><path d="M.5.5h12v11H.500zM.5 4h12M.5 8h12M4.500.5v11M8.500.5v11" fill="none" stroke="#555"/></svg></div>
    <div class="vw"><svg width="13" height="12" viewBox="0 0 13 12"><path d="M.5.5h12v11H.500zM3.500 3.500h6M3.500 6h6M3.500 8.500h6" fill="none" stroke="#555"/></svg></div>
    <div class="vw"><svg width="13" height="12" viewBox="0 0 13 12"><path d="M.5.5h12v11H.500zM6.500.5v6H.500M6.500 6.500h6" fill="none" stroke="#555"/></svg></div>
    <svg style="margin:0 4px 0 5px" width="6" height="2" viewBox="0 0 6 2"><path d="M0 1h6" stroke="#555" stroke-width="2"/></svg>
    <svg width="101" height="13" viewBox="0 0 101 13"><path d="M0 6.500h101" stroke="#b8b8b8"/><path d="M48 1h4v11h-4z" fill="#666"/></svg>
    <svg style="margin:0 13px 0 4px" width="9" height="9" viewBox="0 0 9 9"><path d="M0 4.500h9M4.500 0v9" stroke="#555" stroke-width="2"/></svg>
    <span style="font-size:13px;color:#555">100%</span>
  </div>
</footer>

<div class="dlg">
  <div class="dhead d-flex align-items-center">排序<span class="dq">?</span><svg class="dx" width="11" height="11" viewBox="0 0 11 11"><path d="M.5.5l10 10M10.500.5l-10 10" stroke="#333" stroke-width="1.100"/></svg></div>
  <div class="dbar d-flex">
    <button class="btn dbtn w100" type="button"><svg width="18" height="16" viewBox="0 0 18 16"><path d="M3 0v5M.5 2.500h5" stroke="#18a05a" stroke-width="1.500"/><text x="6" y="8" font-size="8" fill="#2a7bbf">A</text><text x="6" y="16" font-size="8" fill="#8e5fb3">Z</text><path d="M15 2v12M13 12l2 2 2-2" fill="none" stroke="#555"/></svg><span>添加条件(<u>A</u>)</span></button>
    <button class="btn dbtn w101" type="button"><svg width="15" height="13" viewBox="0 0 15 13"><path d="M1 .5l13 12M14 .5 1 12.500" stroke="#555" stroke-width="1.700"/></svg><span>删除条件(<u>D</u>)</span></button>
    <button class="btn dbtn w101" type="button"><svg width="15" height="14" viewBox="0 0 15 14"><path d="M.5.5h6v2M.5.500v10h4" fill="none" stroke="#666"/><path d="M4.500 3.500h6l4 3.500v6.500h-10z" fill="#fff" stroke="#555"/><path d="M6.500 7.500h6M6.500 9.500h6M6.500 11.500h6" stroke="#2a7bbf"/></svg><span>复制条件(<u>C</u>)</span></button>
    <div class="dsplit"></div>
    <button class="btn dbtn w26" type="button"><svg width="11" height="6" viewBox="0 0 11 6"><path d="M0 6 5.500 0 11 6z" fill="#666"/></svg></button>
    <button class="btn dbtn w26" type="button" style="background:#ccc"><svg width="11" height="6" viewBox="0 0 11 6"><path d="M0 0 5.500 6 11 0z" fill="#a8a8a8"/></svg></button>
    <button class="btn dbtn w69" type="button"><span>选项(<u>O</u>)...</span></button>
    <div class="dchk d-flex align-items-center"><svg width="13" height="13" viewBox="0 0 13 13"><path d="M.5.5h12v12H.500z" fill="#fff" stroke="#333"/><path d="M2.500 6.500l3 3 5-6" fill="none" stroke="#333"/></svg><span>数据包含标题(<u>H</u>)</span></div>
  </div>
  <div class="lbx">
    <div class="lh d-flex">
      <div style="width:205px">列</div>
      <div class="lc2">排序依据</div>
      <div class="lc3">次序</div>
    </div>
    <div class="lr d-flex">
      <div class="lk">主要关键字</div>
      <div class="cmb cw122">工作人员<div class="cmbb"><svg width="9" height="5"><use href="#chev"/></svg></div></div>
      <div class="cmb cw157">单元格颜色<div class="cmbb"><svg width="9" height="5"><use href="#chev"/></svg></div></div>
      <div class="cc106 d-flex align-items-center"><div class="swt sg"></div><div class="cdiv"></div><svg class="cdn" width="7" height="4" viewBox="0 0 9 5"><path d="M0 0h9L4.500 5z" fill="#111"/></svg></div>
      <div class="cmb cw75">在顶端<div class="cmbb"><svg width="9" height="5"><use href="#chev"/></svg></div></div>
    </div>
    <div class="lr d-flex lsel">
      <div class="lk">次要关键字</div>
      <div class="cmb cw122">工作人员<div class="cmbb"><svg width="9" height="5"><use href="#chev"/></svg></div></div>
      <div class="cmb cw157">单元格颜色<div class="cmbb"><svg width="9" height="5"><use href="#chev"/></svg></div></div>
      <div class="cc106 d-flex align-items-center"><div class="swt sbl"></div><div class="cdiv"></div><svg class="cdn" width="7" height="4" viewBox="0 0 9 5"><path d="M0 0h9L4.500 5z" fill="#111"/></svg></div>
      <div class="cmb cw75"><span class="hl">在底端</span><div class="cmbb"><svg width="9" height="5"><use href="#chev"/></svg></div></div>
    </div>
  </div>
  <div class="dfoot d-flex">
    <button class="btn okb" type="button" aria-label="确定"></button>
    <button class="btn dbtn w73" type="button">取消</button>
  </div>
  <svg class="grip" width="9" height="9" viewBox="0 0 9 9"><path d="M6 0h2v2H6zM3 3h2v2H3zM6 3h2v2H6zM0 6h2v2H0zM3 6h2v2H3zM6 6h2v2H6z" fill="#bbb"/></svg>
</div>
<div class="stepn">15</div>
<div class="okline"></div>
<div class="tap">确定</div>
<div class="wm">酷课堂出品 <span class="wm2">coolketang.com</span></div>

</div>
<script src="https://cdn.jsdelivr.net/npm/bootstrap@5.3.0/dist/js/bootstrap.bundle.min.js"></script>
</body>
</html>
